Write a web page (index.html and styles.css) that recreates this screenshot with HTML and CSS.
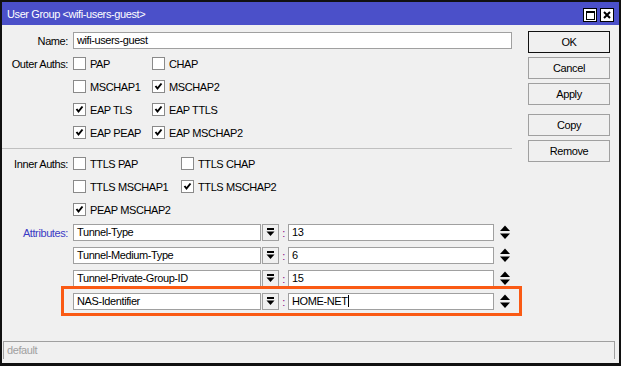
FILE: index.html
```html
<!DOCTYPE html>
<html>
<head>
<meta charset="utf-8">
<link rel="stylesheet" href="styles.css">
</head>
<body>
<div class="window">
  <div class="titlebar">
    <span class="title">User Group &lt;wifi-users-guest&gt;</span>
    <div class="tbtns">
      <span class="tbtn"><svg width="12" height="12" viewBox="0 0 12 12"><rect x="2.5" y="2.5" width="8" height="8" fill="none" stroke="#000" stroke-width="1"/><rect x="2" y="2" width="9" height="2" fill="#000"/></svg></span>
      <span class="tbtn"><svg width="12" height="12" viewBox="0 0 12 12"><path d="M3 3 L9 9 M9 3 L3 9" stroke="#000" stroke-width="2"/></svg></span>
    </div>
  </div>
  <div class="main">
    <div class="form">
      <div class="row">
        <span class="lbl">Name:</span>
        <div class="field name">wifi-users-guest</div>
      </div>
      <div class="row">
        <span class="lbl">Outer Auths:</span>
        <div class="cbs outer">
          <span class="cb"><span class="box"></span>PAP</span>
          <span class="cb"><span class="box"></span>CHAP</span>
        </div>
      </div>
      <div class="row">
        <span class="lbl"></span>
        <div class="cbs outer">
          <span class="cb"><span class="box"></span>MSCHAP1</span>
          <span class="cb"><span class="box"><svg width="11" height="11" viewBox="0 0 11 11"><polyline points="2.5,5 4.5,7.5 8.5,2.5" fill="none" stroke="#000" stroke-width="2"/></svg></span>MSCHAP2</span>
        </div>
      </div>
      <div class="row">
        <span class="lbl"></span>
        <div class="cbs outer">
          <span class="cb"><span class="box"><svg width="11" height="11" viewBox="0 0 11 11"><polyline points="2.5,5 4.5,7.5 8.5,2.5" fill="none" stroke="#000" stroke-width="2"/></svg></span>EAP TLS</span>
          <span class="cb"><span class="box"><svg width="11" height="11" viewBox="0 0 11 11"><polyline points="2.5,5 4.5,7.5 8.5,2.5" fill="none" stroke="#000" stroke-width="2"/></svg></span>EAP TTLS</span>
        </div>
      </div>
      <div class="row">
        <span class="lbl"></span>
        <div class="cbs outer">
          <span class="cb"><span class="box"><svg width="11" height="11" viewBox="0 0 11 11"><polyline points="2.5,5 4.5,7.5 8.5,2.5" fill="none" stroke="#000" stroke-width="2"/></svg></span>EAP PEAP</span>
          <span class="cb"><span class="box"><svg width="11" height="11" viewBox="0 0 11 11"><polyline points="2.5,5 4.5,7.5 8.5,2.5" fill="none" stroke="#000" stroke-width="2"/></svg></span>EAP MSCHAP2</span>
        </div>
      </div>
      <div class="sep"></div>
      <div class="row">
        <span class="lbl">Inner Auths:</span>
        <div class="cbs inner">
          <span class="cb"><span class="box"></span>TTLS PAP</span>
          <span class="cb"><span class="box"></span>TTLS CHAP</span>
        </div>
      </div>
      <div class="row">
        <span class="lbl"></span>
        <div class="cbs inner">
          <span class="cb"><span class="box"></span>TTLS MSCHAP1</span>
          <span class="cb"><span class="box"><svg width="11" height="11" viewBox="0 0 11 11"><polyline points="2.5,5 4.5,7.5 8.5,2.5" fill="none" stroke="#000" stroke-width="2"/></svg></span>TTLS MSCHAP2</span>
        </div>
      </div>
      <div class="row">
        <span class="lbl"></span>
        <div class="cbs inner">
          <span class="cb"><span class="box"><svg width="11" height="11" viewBox="0 0 11 11"><polyline points="2.5,5 4.5,7.5 8.5,2.5" fill="none" stroke="#000" stroke-width="2"/></svg></span>PEAP MSCHAP2</span>
        </div>
      </div>
      <div class="row">
        <span class="lbl blue">Attributes:</span>
        <div class="attr">
          <div class="field akey">Tunnel-Type</div>
          <span class="dd"><svg width="15" height="15" viewBox="0 0 15 15"><rect x="4" y="3" width="7" height="2" fill="#000"/><polygon points="3.5,6.5 11.5,6.5 7.5,11" fill="#000"/></svg></span>
          <span class="colon">:</span>
          <div class="field aval">13</div>
          <span class="ud"><svg width="10" height="15" viewBox="0 0 10 15"><polygon points="5,0.5 10,6 0,6" fill="#000"/><polygon points="0,8.5 10,8.5 5,14" fill="#000"/></svg></span>
        </div>
      </div>
      <div class="row">
        <span class="lbl"></span>
        <div class="attr">
          <div class="field akey">Tunnel-Medium-Type</div>
          <span class="dd"><svg width="15" height="15" viewBox="0 0 15 15"><rect x="4" y="3" width="7" height="2" fill="#000"/><polygon points="3.5,6.5 11.5,6.5 7.5,11" fill="#000"/></svg></span>
          <span class="colon">:</span>
          <div class="field aval">6</div>
          <span class="ud"><svg width="10" height="15" viewBox="0 0 10 15"><polygon points="5,0.5 10,6 0,6" fill="#000"/><polygon points="0,8.5 10,8.5 5,14" fill="#000"/></svg></span>
        </div>
      </div>
      <div class="row">
        <span class="lbl"></span>
        <div class="attr">
          <div class="field akey">Tunnel-Private-Group-ID</div>
          <span class="dd"><svg width="15" height="15" viewBox="0 0 15 15"><rect x="4" y="3" width="7" height="2" fill="#000"/><polygon points="3.5,6.5 11.5,6.5 7.5,11" fill="#000"/></svg></span>
          <span class="colon">:</span>
          <div class="field aval">15</div>
          <span class="ud"><svg width="10" height="15" viewBox="0 0 10 15"><polygon points="5,0.5 10,6 0,6" fill="#000"/><polygon points="0,8.5 10,8.5 5,14" fill="#000"/></svg></span>
        </div>
      </div>
      <div class="row">
        <span class="lbl"></span>
        <div class="attr">
          <div class="field akey">NAS-Identifier</div>
          <span class="dd"><svg width="15" height="15" viewBox="0 0 15 15"><rect x="4" y="3" width="7" height="2" fill="#000"/><polygon points="3.5,6.5 11.5,6.5 7.5,11" fill="#000"/></svg></span>
          <span class="colon">:</span>
          <div class="field aval"><span class="caret">HOME-NET</span></div>
          <span class="ud"><svg width="10" height="15" viewBox="0 0 10 15"><polygon points="5,0.5 10,6 0,6" fill="#000"/><polygon points="0,8.5 10,8.5 5,14" fill="#000"/></svg></span>
        </div>
      </div>
    </div>
    <div class="buttons">
      <div class="btn default">OK</div>
      <div class="btn">Cancel</div>
      <div class="btn">Apply</div>
      <div class="btn gap">Copy</div>
      <div class="btn">Remove</div>
    </div>
  </div>
  <div class="status">default</div>
  <div class="highlight"></div>
</div>
</body>
</html>
```
FILE: styles.css
```css
* { box-sizing: border-box; }
html, body { margin: 0; padding: 0; }
body {
  font-family: "Liberation Sans", Arial, sans-serif;
  font-size: 11px;
  letter-spacing: -0.4px;
  color: #000;
  background: #f0f0f0;
}
.window {
  position: relative;
  width: 621px;
  height: 366px;
  border-style: solid;
  border-color: #111;
  border-width: 2px 2px 3px 2px;
  background: #f0f0f0;
  display: flex;
  flex-direction: column;
}
.titlebar {
  height: 23px;
  background: #4b50c9;
  display: flex;
  align-items: center;
  justify-content: space-between;
  padding: 0 5px 0 5px;
}
.title { color: #fff; font-size: 11px; }
.tbtns { display: flex; gap: 3px; padding-top: 2px; }
.tbtn {
  width: 14px;
  height: 14px;
  background: #fff;
  border: 1px solid #000;
  display: flex;
  align-items: center;
  justify-content: center;
}
.main {
  flex: 1;
  display: flex;
}
.form {
  width: 510px;
  padding-top: 4px;
}
.row {
  display: grid;
  grid-template-columns: 66px 1fr;
  column-gap: 5px;
  height: 23px;
  align-items: center;
}
.lbl { text-align: right; white-space: nowrap; }
.lbl.blue { color: #3b3bc4; }
.field {
  height: 17px;
  background: #fff;
  border: 1px solid #a0a0a0;
  padding-left: 3px;
  line-height: 15px;
  white-space: nowrap;
  overflow: hidden;
}
.cbs { display: flex; align-items: center; }
.cbs.outer .cb:first-child { width: 79px; }
.cbs.inner .cb:first-child { width: 108px; }
.cb { display: flex; align-items: center; white-space: nowrap; }
.box {
  width: 13px;
  height: 13px;
  background: #fff;
  border: 1px solid #8a8a8a;
  margin-right: 4px;
  display: flex;
  align-items: center;
  justify-content: center;
}
.sep {
  height: 1px;
  background: #c0c0c0;
  margin: 4px 0 3px 0;
}
.attr { display: flex; align-items: center; }
.akey { width: 188px; }
.dd {
  width: 17px;
  height: 17px;
  margin-left: 1px;
  border: 1px solid #a0a0a0;
  background: #f0f0f0;
  display: flex;
  align-items: center;
  justify-content: center;
}
.colon {
  width: 9px;
  text-align: center;
  color: #800080;
}
.aval { width: 206px; }
.ud { margin-left: 6px; display: flex; align-items: center; }
.caret { border-right: 1px solid #000; padding-right: 1px; }
.buttons {
  margin-left: 16px;
  width: 82px;
  padding-top: 6px;
  display: flex;
  flex-direction: column;
  gap: 4px;
}
.btn {
  height: 22px;
  border: 1px solid #a0a0a0;
  background: #f0f0f0;
  display: flex;
  align-items: center;
  justify-content: center;
}
.btn.default { border-color: #111; }
.btn.gap { margin-top: 5px; }
.status {
  height: 18px;
  margin: 0 4px 4px 1px;
  border: 1px solid #a0a0a0;
  border-bottom: none;
  color: #a0a0a0;
  padding-left: 3px;
  line-height: 17px;
}
.highlight {
  position: absolute;
  left: 59px;
  top: 284px;
  width: 461px;
  height: 30px;
  border: 3px solid #fa5a14;
}
```
